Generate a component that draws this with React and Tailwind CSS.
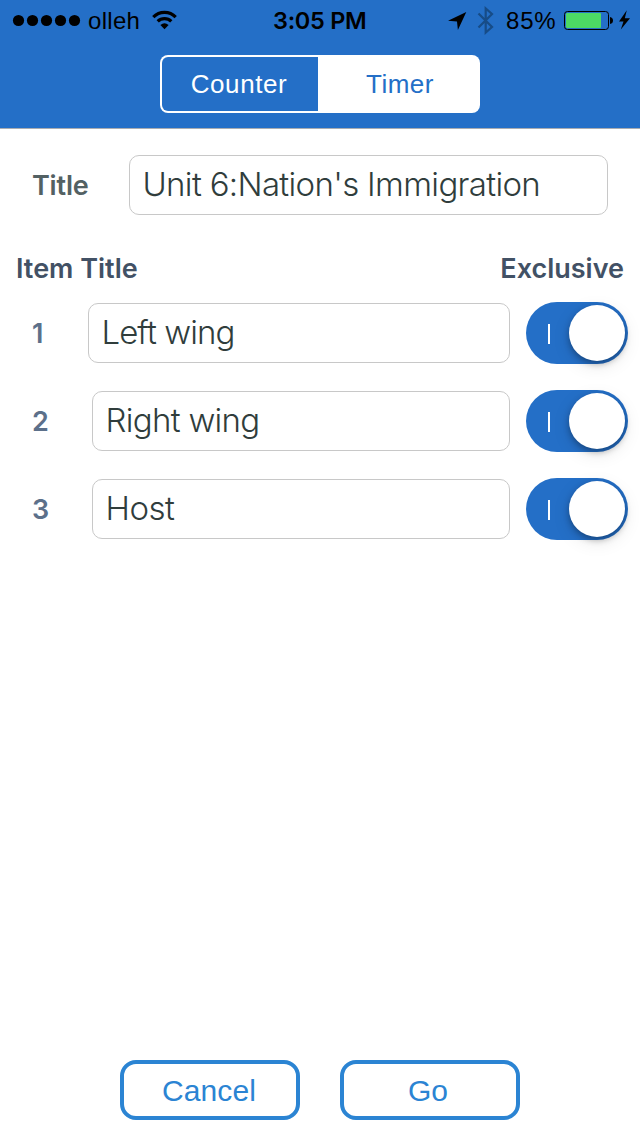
import React from "react";

const items = [
  { id: 1, name: "Left wing", field: "ml-[88px]", text: "tracking-[-0.95px]" },
  { id: 2, name: "Right wing", field: "ml-[92px]", text: "tracking-[-0.7px]" },
  { id: 3, name: "Host", field: "ml-[92px]", text: "tracking-[-0.5px]" },
];

function StatusBar() {
  return (
    <div className="flex h-10 items-center text-black">
      <svg width="84" height="40" viewBox="0 0 84 40">
        {[18.5, 32.5, 46.5, 60.5, 74.5].map((x) => (
          <circle key={x} cx={x} cy="20.5" r="5.6" />
        ))}
      </svg>
      <span className="ml-1 w-[62px] pt-0.5 font-['Liberation_Sans'] text-[24px] leading-[42px] tracking-[0.3px]">olleh</span>
      <svg width="32" height="40" viewBox="150 0 32 40" fill="none" stroke="black">
        <path d="M153.3 17.2 A15.5 15.5 0 0 1 175.7 17.2" strokeWidth="3.2" />
        <path d="M157.7 21.4 A9.6 9.6 0 0 1 171.3 21.4" strokeWidth="3.2" />
        <path d="M160.4 25 Q164.5 21.6 168.6 25 L164.5 29.2Z" fill="black" stroke="none" />
      </svg>
      <span className="ml-[91px] w-[95px] whitespace-nowrap pt-0.5 font-['Inter'] text-[23.5px] font-semibold leading-[42px] tracking-[-0.3px]">3:05 PM</span>
      <svg className="ml-[78px]" width="54" height="40" viewBox="446 0 54 40">
        <path d="M448 20.7 L466.3 12 L457.9 30 L457 21.6Z" />
        <path d="M478.5 13.5 L492 27 L485.7 32.5 V8.5 L492 14 L478.5 27.5" fill="none" stroke="#174c87" strokeWidth="2.2" />
      </svg>
      <span className="ml-[6px] w-[54px] whitespace-nowrap pt-0.5 font-['Liberation_Sans'] text-[24px] leading-[42px] tracking-[0.8px]">85%</span>
      <svg width="76" height="40" viewBox="560 0 76 40">
        <rect x="564.5" y="11.5" width="44" height="18" rx="3" fill="none" stroke="black" />
        <rect x="566" y="13" width="35" height="15" rx="1" fill="#4cd964" />
        <path d="M610 17 Q613 17.5 613 20.5 T610 24Z" />
        <path d="M626.8 10.3 L619 21.4 H623.5 L620.8 29.5 L630 18.2 H624.8Z" />
      </svg>
    </div>
  );
}

function Switch() {
  return (
    <button role="switch" aria-checked="true" className="flex h-[62px] w-[102px] shrink-0 items-center rounded-full bg-[#246fc7] pl-[22px]">
      <span className="mt-0.5 h-5 w-0.5 bg-white" />
      <span className="ml-[19px] h-14 w-14 rounded-full bg-white shadow-[0_3px_6px_rgba(0,0,0,0.3),0_5px_18px_rgba(0,0,0,0.1)]" />
    </button>
  );
}

export default function App() {
  return (
    <div className="flex h-[1136px] w-[640px] flex-col overflow-hidden bg-white font-['Inter',sans-serif]">
      <header className="h-[129px] shrink-0 border-b border-[#a9acb1] bg-[#246fc7]">
        <StatusBar />
        <div className="mx-auto mt-[15px] flex h-[58px] w-80 rounded-lg bg-white p-0.5 font-['Liberation_Sans'] text-[26px] leading-[54px]">
          <button className="w-[156px] rounded-l-md bg-[#246fc7] pr-0.5 tracking-[0.6px] text-white">Counter</button>
          <button className="flex-1 pl-1 tracking-[0.5px] text-[#246fc7]">Timer</button>
        </div>
      </header>
      <div className="mt-[26px] flex h-[60px] items-center">
        <label className="w-[129px] pl-8 pt-0.5 text-[27px] font-semibold leading-[60px] tracking-[-0.2px] text-[#536163]">Title</label>
        <div className="h-[60px] w-[479px] whitespace-nowrap rounded-[10px] border border-[#c8c8c8] pl-[12.5px] text-[33px] font-light leading-[57px] tracking-[-0.67px] text-[#303d3c]">Unit 6:Nation's Immigration</div>
      </div>
      <div className="mt-[34px] flex h-10 justify-between px-4 text-[27px] font-semibold leading-10 text-[#425165]">
        <span>Item Title</span>
        <span>Exclusive</span>
      </div>
      <div className="mt-[13px] flex flex-col gap-[26px]">
        {items.map((item) => (
          <div key={item.id} className="flex h-[62px] items-center pr-3">
            <span className="-mr-[88px] w-[88px] pl-8 pt-0.5 text-[27px] font-semibold tracking-[-0.5px] text-[#5c708a]">{item.id}</span>
            <div className={`${item.field} mr-4 h-[60px] flex-1 rounded-[10px] border border-[#c8c8c8] pl-[12.5px] text-[33px] font-light leading-[57px] text-[#303d3c] ${item.text}`}>{item.name}</div>
            <Switch />
          </div>
        ))}
      </div>
      <footer className="mb-4 mt-auto flex justify-center gap-10 font-['Liberation_Sans'] text-[30px] leading-[54px] text-[#2b84d3]">
        <button className="h-[60px] w-[180px] rounded-2xl border-4 border-[#2b84d3] pr-0.5 tracking-[0.1px]">Cancel</button>
        <button className="h-[60px] w-[180px] rounded-2xl border-4 border-[#2b84d3] pr-1">Go</button>
      </footer>
    </div>
  );
}
